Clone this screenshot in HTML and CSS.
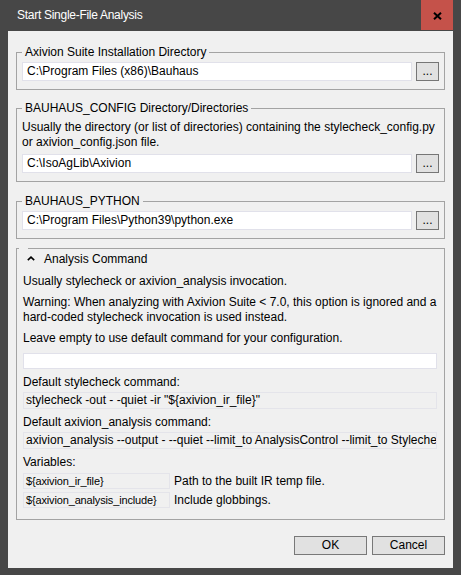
FILE: index.html
```html
<!DOCTYPE html>
<html lang="en">
<head>
<meta charset="utf-8">
<title>Start Single-File Analysis</title>
<link rel="stylesheet" href="styles.css">
</head>
<body>
<div class="window">
  <div class="titlebar">
    <span class="title">Start Single-File Analysis</span>
    <div class="close" aria-label="Close">
      <svg width="9" height="8" viewBox="0 0 9 8"><path d="M1 0.8 L8 7.2 M8 0.8 L1 7.2" stroke="#000" stroke-width="2"/></svg>
    </div>
  </div>
  <div class="content">
    <fieldset class="group g1">
      <legend>Axivion Suite Installation Directory</legend>
      <div class="path-row">
        <div class="input">C:\Program Files (x86)\Bauhaus</div>
        <div class="browse">...</div>
      </div>
    </fieldset>

    <fieldset class="group g2">
      <legend>BAUHAUS_CONFIG Directory/Directories</legend>
      <p class="desc">Usually the directory (or list of directories) containing the stylecheck_config.py or axivion_config.json file.</p>
      <div class="path-row">
        <div class="input">C:\IsoAgLib\Axivion</div>
        <div class="browse">...</div>
      </div>
    </fieldset>

    <fieldset class="group g3">
      <legend>BAUHAUS_PYTHON</legend>
      <div class="path-row">
        <div class="input">C:\Program Files\Python39\python.exe</div>
        <div class="browse">...</div>
      </div>
    </fieldset>

    <fieldset class="group g4">
      <legend class="empty-legend"></legend>
      <div class="collapse-head">
        <svg class="chev" width="8" height="5" viewBox="0 0 8 5"><path d="M0.8 4.2 L4 1.2 L7.2 4.2" fill="none" stroke="#000" stroke-width="1.6"/></svg>
        <span>Analysis Command</span>
      </div>
      <p class="line l-first">Usually stylecheck or axivion_analysis invocation.</p>
      <p class="line">Warning: When analyzing with Axivion Suite &lt; 7.0, this option is ignored and a hard-coded stylecheck invocation is used instead.</p>
      <p class="line">Leave empty to use default command for your configuration.</p>
      <div class="input cmd-input"></div>
      <p class="line">Default stylecheck command:</p>
      <div class="ro-field">stylecheck -out - -quiet -ir "${axivion_ir_file}"</div>
      <p class="line">Default axivion_analysis command:</p>
      <div class="ro-field">axivion_analysis --output - --quiet --limit_to AnalysisControl --limit_to StylecheckControl --include "${axivion_analysis_include}"</div>
      <p class="line">Variables:</p>
      <div class="var-row v1">
        <div class="var-name">${axivion_ir_file}</div>
        <span class="var-desc">Path to the built IR temp file.</span>
      </div>
      <div class="var-row v2">
        <div class="var-name">${axivion_analysis_include}</div>
        <span class="var-desc">Include globbings.</span>
      </div>
    </fieldset>

    <div class="buttons">
      <div class="btn">OK</div>
      <div class="btn">Cancel</div>
    </div>
  </div>
</div>
</body>
</html>
```

FILE: styles.css
```css
* { box-sizing: border-box; }
html, body {
  margin: 0;
  padding: 0;
  background: #474747;
}
body {
  width: 461px;
  height: 575px;
  font-family: "Liberation Sans", Arial, sans-serif;
  font-size: 12px;
  color: #000;
}
.window {
  width: 461px;
  height: 575px;
  padding: 0 8px 7px 8px;
  display: flex;
  flex-direction: column;
}
.titlebar {
  height: 31px;
  display: flex;
  align-items: flex-start;
  justify-content: space-between;
}
.title {
  color: #fff;
  padding-left: 9px;
  line-height: 31px;
  letter-spacing: -0.28px;
}
.close {
  width: 32px;
  height: 30px;
  background: #c5524a;
  display: flex;
  align-items: center;
  justify-content: center;
  padding-top: 1px;
}
.content {
  flex: 1;
  background: #f0f0f0;
  padding: 13px 8px 12px 8px;
  display: flex;
  flex-direction: column;
}
.group {
  margin: 0;
  min-width: 0;
  border: 1px solid #a3a3a3;
  padding: 2px 5px 8px 5px;
}
.group legend {
  padding: 0 3px;
  margin: 0;
  line-height: 16px;
  height: 16px;
}
.g2 { margin-top: 10px; padding-top: 4px; }
.g3 { margin-top: 11px; }
.g4 {
  margin-top: 8px;
  padding: 0 7px 11px 6px;
  display: flex;
  flex-direction: column;
}
.g4 legend.empty-legend {
  padding: 0;
  margin-left: -4px;
  width: 9px;
  height: 3px;
}
.desc {
  margin: 0 0 4px 0;
  line-height: 15px;
}
.path-row {
  display: flex;
  gap: 4px;
  height: 19px;
}
.input {
  background: #fff;
  border: 1px solid #e1e1ea;
  padding: 0 5px 0 4px;
  line-height: 17px;
  white-space: nowrap;
  overflow: hidden;
}
.path-row .input { flex: 1; }
.browse {
  width: 23px;
  background: #e1e1e1;
  border: 1px solid #767676;
  text-align: center;
  line-height: 17px;
}
.collapse-head {
  margin-top: 1px;
  height: 16px;
  display: flex;
  align-items: center;
  line-height: 16px;
}
.chev {
  margin-left: 4px;
  margin-right: 9px;
  margin-top: -1px;
}
.line {
  margin: 6px 0 0 0;
  line-height: 15px;
}
.l-first { margin-top: 7px; }
.cmd-input {
  margin-top: 7px;
  height: 16px;
}
.ro-field {
  margin-top: 2px;
  height: 17px;
  background: #f0f0f0;
  border: 1px solid #e4e4ea;
  padding: 0 2px;
  line-height: 15px;
  white-space: nowrap;
  overflow: hidden;
}
.var-row {
  margin-top: 3px;
  display: flex;
  align-items: center;
  gap: 4px;
  height: 16px;
}
.v2 { margin-top: 3px; }
.var-name {
  width: 147px;
  height: 16px;
  background: #f0f0f0;
  border: 1px solid #e4e4ea;
  padding: 0 2px;
  font-size: 11px;
  letter-spacing: -0.15px;
  line-height: 14px;
  white-space: nowrap;
  overflow: hidden;
}
.var-desc { line-height: 16px; }
.buttons {
  margin-top: 16px;
  display: flex;
  justify-content: flex-end;
  gap: 5px;
}
.btn {
  width: 73px;
  height: 19px;
  background: #e1e1e1;
  border: 1px solid #787878;
  text-align: center;
  line-height: 17px;
}
```
